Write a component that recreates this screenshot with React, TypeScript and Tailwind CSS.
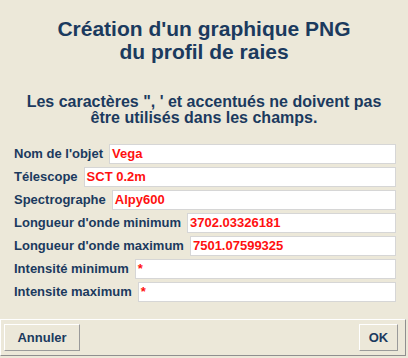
import React from "react";

const rows: { label: string; value: string }[] = [
  { label: "Nom de l'objet", value: "Vega" },
  { label: "Télescope", value: "SCT 0.2m" },
  { label: "Spectrographe", value: "Alpy600" },
  { label: "Longueur d'onde minimum", value: "3702.03326181" },
  { label: "Longueur d'onde maximum", value: "7501.07599325" },
  { label: "Intensité minimum", value: "*" },
  { label: "Intensite maximum", value: "*" },
];

export default function App() {
  return (
    <div
      className="w-[408px] h-[358px] bg-[#ece8d9] text-[#1b3a5e] flex flex-col overflow-hidden"
      style={{ fontFamily: '"Liberation Sans", Arial, sans-serif' }}
    >
      <div className="pt-[17px] text-center font-bold text-[21px] leading-[23px]">
        <div>Création d'un graphique PNG</div>
        <div>du profil de raies</div>
      </div>
      <div className="pt-[31px] text-center font-bold text-[16px] leading-[16px]">
        <div>Les caractères ", ' et accentués ne doivent pas</div>
        <div>être utilisés dans les champs.</div>
      </div>
      <div className="mt-[18px] pl-[14px] pr-[12px] flex flex-col gap-[3px]">
        {rows.map((r) => (
          <div key={r.label} className="flex items-center h-[20px] gap-[6px]">
            <span className="font-bold text-[13px] whitespace-nowrap">{r.label}</span>
            <div className="flex-1 h-[20px] bg-white border border-[#d6d6d6] flex items-center pl-[2px] font-bold text-[13px] text-[#ff1010]">
              {r.value}
            </div>
          </div>
        ))}
      </div>
      <div className="mt-[17px] shrink-0 w-[406px] h-[37px] border-t border-l border-white border-r border-b border-r-[#8f8f8f] border-b-[#8f8f8f] flex items-center justify-between pl-[3px] pr-[7px]">
        <button className="w-[76px] h-[27px] bg-[#ece8d9] border border-white border-r-[#9a9a9a] border-b-[#9a9a9a] font-bold text-[13px] text-[#1b3a5e]">
          Annuler
        </button>
        <button className="w-[39px] h-[27px] bg-[#ece8d9] border border-white border-r-[#9a9a9a] border-b-[#9a9a9a] font-bold text-[13px] text-[#1b3a5e]">
          OK
        </button>
      </div>
    </div>
  );
}
